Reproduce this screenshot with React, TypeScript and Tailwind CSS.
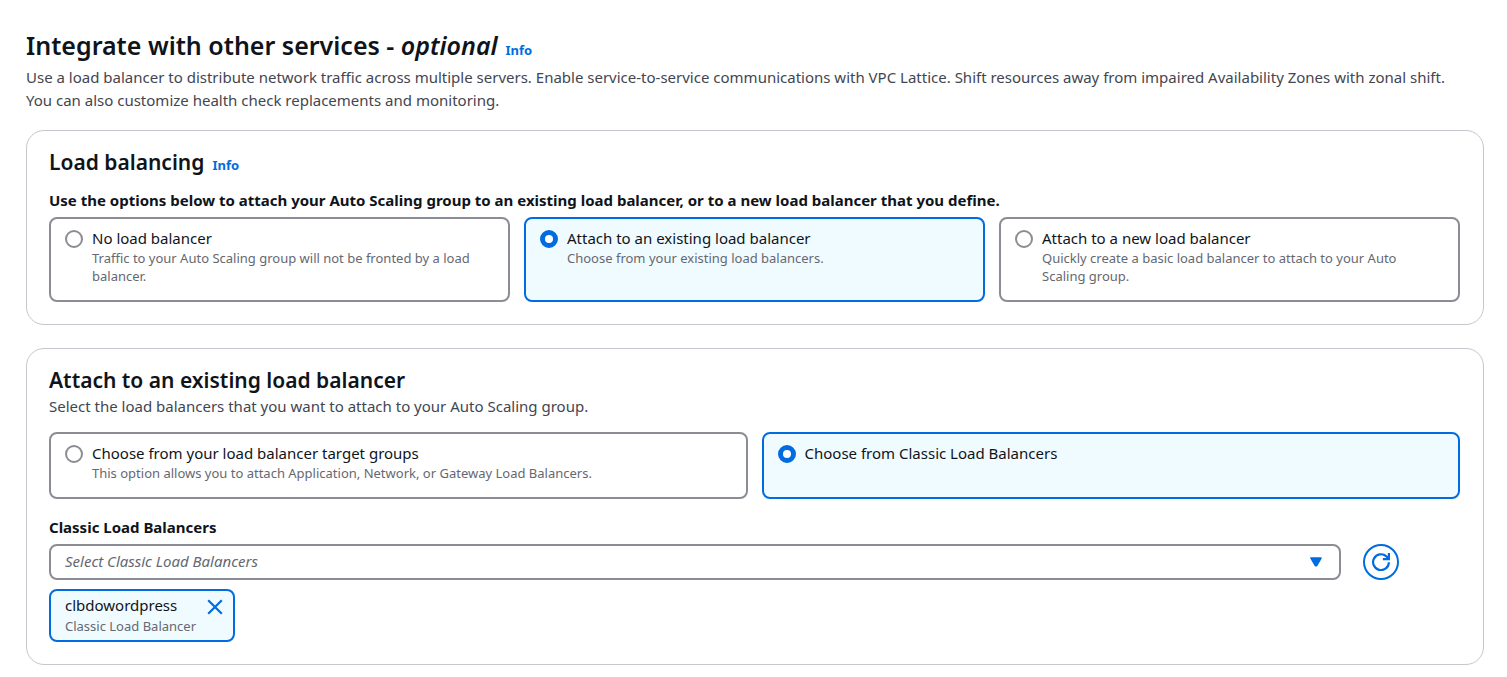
import { useState } from "react";
import type { ReactNode } from "react";

function InfoLink() {
  return (
    <a href="#info" className="text-[13px] font-bold text-[#006ce0]">
      Info
    </a>
  );
}

type TileProps = {
  name: string;
  label: string;
  description?: string;
  checked: boolean;
  onSelect: () => void;
};

function Tile({ name, label, description, checked, onSelect }: TileProps) {
  return (
    <label
      className={
        "flex flex-1 cursor-pointer gap-[9px] rounded-lg border-2 pt-2 pr-5 pb-[15px] pl-3.5 " +
        (checked ? "border-[#006ce0] bg-[#f0fbff]" : "border-[#8c8c94] bg-white")
      }
    >
      <input
        type="radio"
        name={name}
        checked={checked}
        onChange={onSelect}
        className="mt-[3px] size-[18px] shrink-0 appearance-none rounded-full border-2 border-[#8c8c94] bg-white checked:border-[5px] checked:border-[#006ce0]"
      />
      <span className="flex flex-col">
        <span className="text-[15px] leading-[22px]">{label}</span>
        {description && (
          <span className="text-[13px] leading-[18px] text-[#656871]">{description}</span>
        )}
      </span>
    </label>
  );
}

function Card({ children }: { children: ReactNode }) {
  return (
    <section className="rounded-[18px] border border-[#c6c6cd] bg-white pt-[17px] pr-[23px] pb-[22px] pl-[22px]">
      {children}
    </section>
  );
}

const modes = [
  {
    label: "No load balancer",
    description: "Traffic to your Auto Scaling group will not be fronted by a load balancer.",
  },
  {
    label: "Attach to an existing load balancer",
    description: "Choose from your existing load balancers.",
  },
  {
    label: "Attach to a new load balancer",
    description: "Quickly create a basic load balancer to attach to your Auto Scaling group.",
  },
];

const sources = [
  {
    label: "Choose from your load balancer target groups",
    description:
      "This option allows you to attach Application, Network, or Gateway Load Balancers.",
  },
  { label: "Choose from Classic Load Balancers" },
];

export default function App() {
  const [mode, setMode] = useState(1);
  const [source, setSource] = useState(1);

  return (
    <main className="bg-white pt-7 pr-[23px] pb-3 pl-[26px] font-['Noto_Sans',sans-serif] text-[15px] text-[#0f141a]">
      <header className="pb-[18px]">
        <div className="mb-1 flex items-baseline gap-2">
          <h1 className="text-[25px] leading-[34px] font-semibold">
            Integrate with other services - <i>optional</i>
          </h1>
          <InfoLink />
        </div>
        <p className="pr-5 leading-[23px] text-[#424650]">
          Use a load balancer to distribute network traffic across multiple servers. Enable
          service-to-service communications with VPC Lattice. Shift resources away from impaired
          Availability Zones with zonal shift. You can also customize health check replacements and
          monitoring.
        </p>
      </header>

      <div className="flex flex-col gap-[23px]">
        <Card>
          <div className="mb-3 flex items-baseline gap-2">
            <h2 className="text-[21px] leading-7 font-semibold">Load balancing</h2>
            <InfoLink />
          </div>
          <fieldset>
            <legend className="mb-[5px] leading-6 font-bold">
              Use the options below to attach your Auto Scaling group to an existing load balancer,
              or to a new load balancer that you define.
            </legend>
            <div className="flex gap-3.5">
              {modes.map((item, i) => (
                <Tile
                  key={item.label}
                  name="mode"
                  {...item}
                  checked={mode === i}
                  onSelect={() => setMode(i)}
                />
              ))}
            </div>
          </fieldset>
        </Card>

        <Card>
          <h2 className="text-[21px] leading-7 font-semibold">
            Attach to an existing load balancer
          </h2>
          <p className="leading-6 text-[#424650]">
            Select the load balancers that you want to attach to your Auto Scaling group.
          </p>
          <div className="mt-3.5 flex gap-3.5">
            {sources.map((item, i) => (
              <Tile
                key={item.label}
                name="source"
                {...item}
                checked={source === i}
                onSelect={() => setSource(i)}
              />
            ))}
          </div>

          <label htmlFor="classic" className="mt-4 mb-[5px] block leading-6 font-bold">
            Classic Load Balancers
          </label>
          <div className="flex items-center gap-[22px] pr-[61px]">
            <div className="relative flex-1">
              <select
                id="classic"
                defaultValue=""
                className="block h-9 w-full appearance-none rounded-lg border-2 border-[#8c8c94] bg-white px-3.5 pb-0.5 text-[15px] text-[#656871] italic"
              >
                <option value="">Select Classic Load Balancers</option>
                <option value="clbdowordpress">clbdowordpress</option>
              </select>
              <svg
                viewBox="0 0 12 10"
                className="pointer-events-none absolute top-[13px] right-[19px] h-2.5 w-3"
                aria-hidden="true"
              >
                <path
                  d="M1 1h10L6.6 8.6h-1.2z"
                  fill="#006ce0"
                  stroke="#006ce0"
                  strokeWidth="1.6"
                  strokeLinejoin="round"
                />
              </svg>
            </div>
            <button
              type="button"
              aria-label="Refresh"
              className="flex size-9 items-center justify-center rounded-full border-2 border-[#006ce0] bg-white text-[#006ce0]"
            >
              <svg
                viewBox="0 0 18 18"
                className="size-[18px]"
                fill="none"
                stroke="currentColor"
                strokeWidth="2.2"
              >
                <path d="M16.9 9.2A7.9 7.9 0 1 1 14.4 3.4L16.8 5.8" />
                <path d="M16.9 0v6.1h-6" />
              </svg>
            </button>
          </div>

          <div className="mt-[9px] flex">
            <div className="flex items-start gap-[11px] rounded-lg border-2 border-[#006ce0] bg-[#f0fbff] pt-[3px] pr-2.5 pb-1 pl-3.5">
              <div className="flex flex-col">
                <span className="leading-[22px]">clbdowordpress</span>
                <span className="text-[13px] leading-5 text-[#656871]">Classic Load Balancer</span>
              </div>
              <button
                type="button"
                aria-label="Remove clbdowordpress"
                className="mt-[5px] text-[#006ce0]"
              >
                <svg
                  viewBox="0 0 16 16"
                  className="size-4"
                  fill="none"
                  stroke="currentColor"
                  strokeWidth="2.2"
                >
                  <path d="M1.2 1.2l13.6 13.6M14.8 1.2L1.2 14.8" />
                </svg>
              </button>
            </div>
          </div>
        </Card>
      </div>
    </main>
  );
}
